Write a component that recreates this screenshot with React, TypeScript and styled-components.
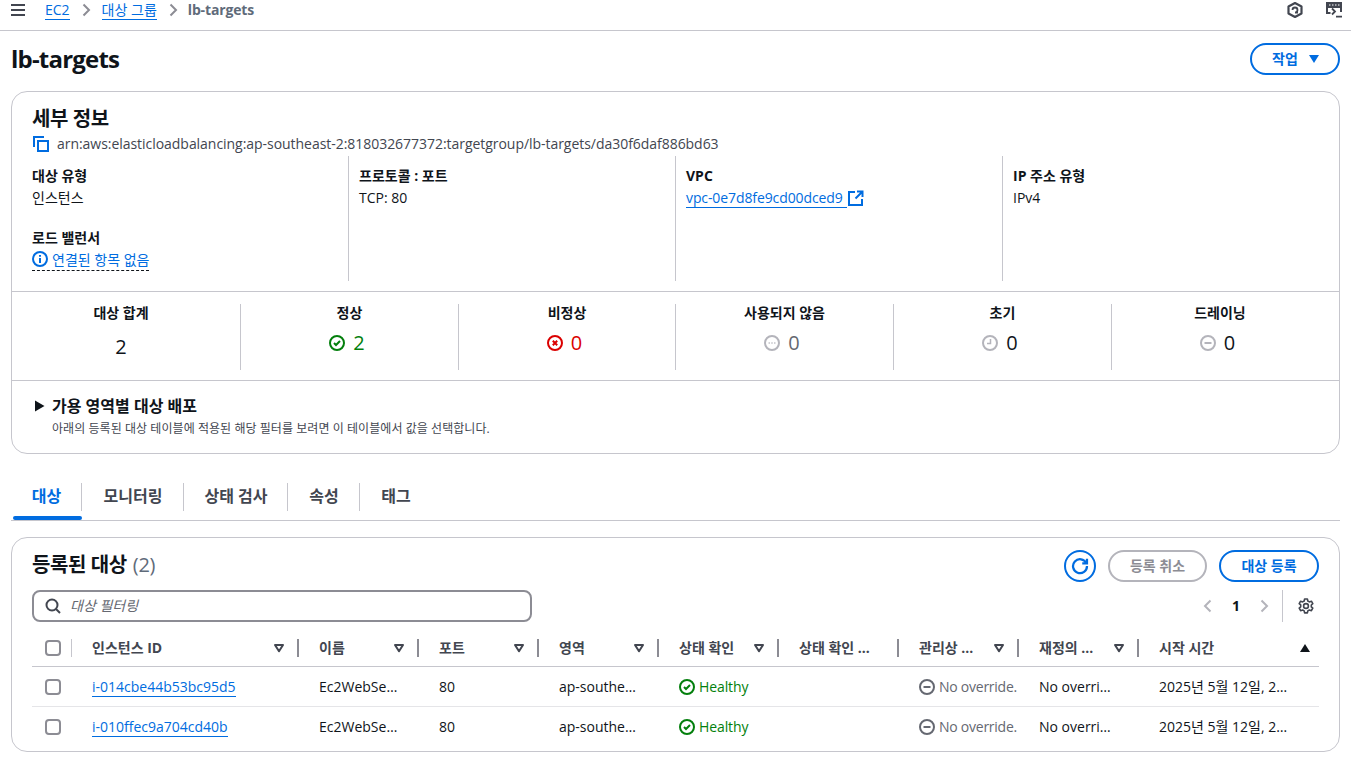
import React from "react";
import styled, { createGlobalStyle } from "styled-components";

const Global = createGlobalStyle`
  html, body { margin: 0; padding: 0; background: #fff; }
  body { font-family: "Open Sans", "Noto Sans CJK KR", sans-serif; font-size: 14px; line-height: 20px; color: #0f141a; overflow: hidden; }
  * { box-sizing: border-box; }
`;

const Page = styled.div`width: 1351px; height: 779px; overflow: hidden;`;
const TopBar = styled.header`
  height: 31px; border-bottom: 1px solid #c6c6cd; display: flex; align-items: flex-start; padding: 0 9px 0 11px;
`;
const Menu = styled.span`display: flex; width: 14px; height: 20px; align-items: center; margin-right: 20px;`;
const Crumbs = styled.nav`display: flex; align-items: center; height: 20px; font-size: 14px; flex: 1;`;
const Crumb = styled.a`color: #006ce0; border-bottom: 1px solid #006ce0; line-height: 19px;`;
const CrumbCurrent = styled.span`color: #5f6b7a; font-weight: 700; letter-spacing: -0.15px; margin-left: -1px;`;
const Sep = styled.span`display: flex; width: 32px; justify-content: center; align-items: center; color: #8c8c94;`;
const TopIcons = styled.div`display: flex; gap: 23px; height: 20px; align-items: center;`;

const TitleRow = styled.div`display: flex; justify-content: space-between; align-items: center; height: 60px; padding: 0 11px 4px 11px;`;
const H1 = styled.h1`margin: 0; font-size: 24px; line-height: 30px; font-weight: 700; letter-spacing: -0.8px;`;
const Pill = styled.button<{ $disabled?: boolean; $w: number }>`
  width: ${p => p.$w}px; height: 32px; border-radius: 16px; background: #fff; font: inherit; font-weight: 700;
  border: 2px solid ${p => (p.$disabled ? "#b4b4bb" : "#006ce0")};
  color: ${p => (p.$disabled ? "#8c8c94" : "#006ce0")};
  display: flex; align-items: center; justify-content: center; gap: 8px; padding: 0;
`;
const MenuPill = styled(Pill)`gap: 10px; padding-left: 2px;`;

const Card = styled.section<{ $h: number }>`
  margin: 0 11px; width: 1329px; height: ${p => p.$h}px; border: 1px solid #c6c6cd; border-radius: 16px; background: #fff;
`;
const DetailHead = styled.div`padding: 15px 20px 0 21px; height: 63px;`;
const H2 = styled.h2`margin: 0 0 0 -1px; font-size: 20px; line-height: 24px; font-weight: 700; letter-spacing: -0.4px;`;
const Arn = styled.div`display: flex; align-items: center; gap: 8px; margin-top: 3px; height: 20px; color: #424650; white-space: nowrap; letter-spacing: -0.04px;`;
const Cols = styled.div`display: grid; grid-template-columns: repeat(4, 327px); height: 125px; margin-top: 1px; padding-left: 10px;`;
const Col = styled.div<{ $line?: boolean }>`
  padding: 10px 0 0 10px; border-right: ${p => (p.$line ? "1px solid #c6c6cd" : "none")};
`;
const Label = styled.div`font-weight: 700; margin-bottom: 2px; line-height: 20px;`;
const Val = styled.div`line-height: 20px; height: 20px; display: flex; align-items: center; gap: 1px;`;
const Block = styled.div`margin-top: 20px;`;
const BlockLabel = styled(Label)`margin-bottom: 0;`;
const Link = styled.a`color: #006ce0; border-bottom: 1px solid #006ce0; line-height: 20px; display: inline-block; height: 20px; letter-spacing: -0.1px; padding-right: 4px;`;
const InfoLink = styled.span`display: inline-flex; align-items: center; gap: 4px; color: #006ce0; border-bottom: 1px dashed #0f141a; height: 23px; line-height: 21px;`;
const Rule = styled.div`height: 1px; background: #c6c6cd;`;
const DetailRule = styled(Rule)`margin-top: 10px;`;
const Stats = styled.div`display: grid; grid-template-columns: 229px 218px 217px 218px 218px 1fr; height: 66px; margin: 12px 11px 10px 0;`;
const Stat = styled.div<{ $last?: boolean; $first?: boolean }>`
  border-right: ${p => (p.$last ? "none" : "1px solid #c6c6cd")}; display: flex; flex-direction: column; align-items: center;
  padding-right: ${p => (p.$first ? "10px" : "0")};
`;
const StatLabel = styled.div`font-weight: 700; height: 20px; margin-top: -1px; margin-bottom: 7px;`;
const StatVal = styled.div<{ $c: string }>`display: flex; align-items: center; gap: 8px; font-size: 20px; line-height: 26px; color: ${p => p.$c}; height: 26px; padding-right: 5px;`;
const Total = styled.div`font-size: 20px; line-height: 26px; margin-top: 4px;`;
const Expand = styled.div`padding: 15px 20px 0 23px;`;
const ExpandHead = styled.div`display: flex; align-items: center; gap: 7px; font-size: 16px; line-height: 20px; font-weight: 700;`;
const ExpandDesc = styled.div`font-size: 12px; line-height: 16px; color: #424650; margin: 5px 0 0 17px; letter-spacing: 0.06px;`;

const Tabs = styled.div`display: flex; align-items: stretch; margin: 29px 11px 16px; height: 38px; width: 1329px; border-bottom: 1px solid #c6c6cd;`;
const Tab = styled.div<{ $w: number; $active?: boolean; $last?: boolean }>`
  position: relative; width: ${p => p.$w}px; font-weight: 700; font-size: 16px; display: flex; justify-content: center; padding-top: 3px;
  color: ${p => (p.$active ? "#006ce0" : "#424650")};
  &::after { content: ""; position: absolute; right: 0; top: 0; height: 28px; width: 1px; background: #c6c6cd; display: ${p => (p.$last ? "none" : "block")}; }
  ${p => p.$active ? `&::before { content: ""; position: absolute; left: 2px; right: 0; bottom: 0; height: 4px; border-radius: 2px; background: #006ce0; }` : ""}
`;

const TableHead = styled.div`display: flex; justify-content: space-between; padding: 12px 20px 0 21px; height: 52px; align-items: flex-start;`;
const H2Row = styled.div`display: flex; gap: 6px; align-items: center; height: 30px;`;
const Count = styled.span`font-size: 20px; line-height: 24px; color: #5f6b7a; letter-spacing: -0.3px;`;
const Actions = styled.div`display: flex; gap: 12px;`;
const FilterRow = styled.div`display: flex; justify-content: space-between; align-items: flex-start; padding: 0 20px; height: 40px;`;
const Filter = styled.div`
  width: 500px; height: 32px; border: 2px solid #8c8c94; border-radius: 8px; display: flex; align-items: center; gap: 9px; padding-left: 11px;
  font-style: italic; color: #656871; font-size: 14px;
`;
const Pager = styled.div`display: flex; align-items: center; height: 32px; color: #0f141a; font-weight: 700;`;
const PagerCell = styled.span<{ $w: number }>`display: flex; justify-content: center; align-items: center; width: ${p => p.$w}px;`;
const PagerLine = styled.span`width: 1px; height: 32px; background: #c6c6cd; margin: -1px 15px 0 0;`;
const Gear = styled.span`display: flex; width: 21px;`;

const Table = styled.div`margin: 0 20px; width: 1287px;`;
const rowCols = "60px 227px 120px 120px 120px 120px 120px 120px 120px 160px";
const HeadRow = styled.div`display: grid; grid-template-columns: ${rowCols}; height: 37px; border-bottom: 1px solid #c6c6cd; align-items: center;`;
const Row = styled.div<{ $last?: boolean }>`display: grid; grid-template-columns: ${rowCols}; height: ${p => (p.$last ? "39px" : "40px")}; align-items: center; border-bottom: ${p => (p.$last ? "none" : "1px solid #e5e5e8")};`;
const Th = styled.div`
  display: flex; align-items: center; justify-content: space-between; font-weight: 700; color: #424650; height: 20px; position: relative; padding-right: 14px; margin-right: 20px; white-space: nowrap;
  &::after { content: ""; position: absolute; right: 0; top: 1px; height: 18px; width: 2px; background: #8c8c94; }
`;
const ThCheck = styled.div`display: flex; align-items: center; height: 20px; position: relative; padding-left: 13px;
  &::after { content: ""; position: absolute; left: 39px; top: 1px; height: 18px; width: 1px; background: #c6c6cd; }
`;
const ThLast = styled.div`display: flex; align-items: center; justify-content: space-between; font-weight: 700; color: #424650; height: 20px; padding-right: 8px;`;
const Box = styled.span`display: block; width: 16px; height: 16px; border: 2px solid #8c8c94; border-radius: 4px; margin-left: 13px;`;
const ThBox = styled(Box)`margin-left: 0;`;
const Td = styled.div`white-space: nowrap; overflow: hidden;`;
const RowLink = styled.a`color: #006ce0; border-bottom: 1px solid #006ce0;`;
const Status = styled.div<{ $c: string; $tight?: boolean }>`display: flex; align-items: center; gap: 4px; color: ${p => p.$c}; white-space: nowrap; letter-spacing: ${p => (p.$tight ? "-0.25px" : "-0.1px")};`;

const Chevron = ({ left, c = "#8c8c94" }: { left?: boolean; c?: string }) => (
  <svg width="16" height="16" viewBox="0 0 16 16" fill="none" stroke={c} strokeWidth="2">
    <path d={left ? "M10.5 2.5 5 8l5.5 5.5" : "M5.5 2.5 11 8l-5.5 5.5"} />
  </svg>
);
const Filt = () => (
  <svg width="12" height="10" viewBox="0 0 12 10" fill="none" stroke="#424650" strokeWidth="2" strokeLinejoin="round"><path d="M2 2h8L6 8.2z" /></svg>
);
const CircleIcon = ({ c, kind, size = 16 }: { c: string; kind: string; size?: number }) => (
  <svg width={size} height={size} viewBox="0 0 16 16" fill="none" stroke={c} strokeWidth="2">
    <circle cx="8" cy="8" r="7" />
    {kind === "check" && <path d="m5 8 2 2 4-4" />}
    {kind === "x" && <path d="m5.8 5.8 4.4 4.4m0-4.4-4.4 4.4" />}
    {kind === "minus" && <path d="M4.5 8h7" />}
    {kind === "clock" && <path d="M8.5 4v4.500H5" strokeWidth="1.5" />}
    {kind === "dots" && <path d="M4.6 8h1.200m1.600 0h1.200m1.600 0h1.200" strokeWidth="1.6" />}
    {kind === "info" && <path d="M8 7v5M8 4v1.800" />}
  </svg>
);

const healthy = (
  <Status $c="#037f0c"><CircleIcon c="#037f0c" kind="check" /><span>Healthy</span></Status>
);
const noOverride = (
  <Status $c="#656871" $tight><CircleIcon c="#656871" kind="minus" /><span>No override.</span></Status>
);

const rows = ["i-014cbe44b53bc95d5", "i-010ffec9a704cd40b"];

export default function App() {
  return (
    <Page>
      <Global />
      <TopBar>
        <Menu>
          <svg width="14" height="12" viewBox="0 0 14 12" stroke="#424650" strokeWidth="2"><path d="M0 1h14M0 6h14M0 11h14" /></svg>
        </Menu>
        <Crumbs>
          <Crumb>EC2</Crumb>
          <Sep><Chevron /></Sep>
          <Crumb>대상 그룹</Crumb>
          <Sep><Chevron /></Sep>
          <CrumbCurrent>lb-targets</CrumbCurrent>
        </Crumbs>
        <TopIcons>
          <svg width="16" height="16" viewBox="0 0 16 16" fill="none" stroke="#424650" strokeWidth="2.2"><path d="M8 1 14.500 4.500v7L8 15 1.500 11.500v-7z" strokeLinejoin="round" /><path d="M5.500 8a2.500 2.500 0 1 1 2.500 2.500h3" strokeWidth="1.8" /></svg>
          <svg width="16" height="16" viewBox="0 0 16 16" fill="none" stroke="#424650"><path d="M1 1h14v4H1z" fill="#424650" strokeWidth="2" /><path d="M1 5v6h3.500M15 5v5" strokeWidth="2" /><path d="m6 6.500 3 3-3 3M10 14.700h6" strokeWidth="1.8" /><path d="M3 3h1.500M6 3h1.500M9 3h1.500M12 3h1.500" stroke="#fff" strokeWidth="1.2" /></svg>
        </TopIcons>
      </TopBar>
      <TitleRow>
        <H1>lb-targets</H1>
        <MenuPill $w={90}>
          작업
          <svg width="12" height="10" viewBox="0 0 12 10"><path d="M1 1h10L6 9z" fill="#006ce0" /></svg>
        </MenuPill>
      </TitleRow>
      <Card $h={363}>
        <DetailHead>
          <H2>세부 정보</H2>
          <Arn>
            <svg width="16" height="16" viewBox="0 0 16 16" fill="none" stroke="#006ce0" strokeWidth="2"><path d="M1 11V1h10" /><path d="M5 5h10v10H5z" /></svg>
            arn:aws:elasticloadbalancing:ap-southeast-2:818032677372:targetgroup/lb-targets/da30f6daf886bd63
          </Arn>
        </DetailHead>
        <Cols>
          <Col $line>
            <Label>대상 유형</Label>
            <Val>인스턴스</Val>
            <Block>
              <BlockLabel>로드 밸런서</BlockLabel>
              <InfoLink><CircleIcon c="#006ce0" kind="info" />연결된 항목 없음</InfoLink>
            </Block>
          </Col>
          <Col $line>
            <Label>프로토콜 : 포트</Label>
            <Val>TCP: 80</Val>
          </Col>
          <Col $line>
            <Label>VPC</Label>
            <Val>
              <Link>vpc-0e7d8fe9cd00dced9</Link>
              <svg width="16" height="16" viewBox="0 0 16 16" fill="none" stroke="#006ce0" strokeWidth="2"><path d="M7 2H1v13h13V9" /><path d="M9 1.500h5.500V7M14 2 7.500 8.500" /></svg>
            </Val>
          </Col>
          <Col>
            <Label>IP 주소 유형</Label>
            <Val>IPv4</Val>
          </Col>
        </Cols>
        <DetailRule />
        <Stats>
          <Stat $first>
            <StatLabel>대상 합계</StatLabel>
            <Total>2</Total>
          </Stat>
          <Stat>
            <StatLabel>정상</StatLabel>
            <StatVal $c="#037f0c"><CircleIcon c="#037f0c" kind="check" />2</StatVal>
          </Stat>
          <Stat>
            <StatLabel>비정상</StatLabel>
            <StatVal $c="#db0000"><CircleIcon c="#db0000" kind="x" />0</StatVal>
          </Stat>
          <Stat>
            <StatLabel>사용되지 않음</StatLabel>
            <StatVal $c="#656871"><CircleIcon c="#b4b4bb" kind="dots" />0</StatVal>
          </Stat>
          <Stat>
            <StatLabel>초기</StatLabel>
            <StatVal $c="#0f141a"><CircleIcon c="#b4b4bb" kind="clock" />0</StatVal>
          </Stat>
          <Stat $last>
            <StatLabel>드레이닝</StatLabel>
            <StatVal $c="#0f141a"><CircleIcon c="#b4b4bb" kind="minus" />0</StatVal>
          </Stat>
        </Stats>
        <Rule />
        <Expand>
          <ExpandHead>
            <svg width="10" height="12" viewBox="0 0 10 12"><path d="M0 0.500v11l9.500-5.500z" fill="#0f141a" /></svg>
            가용 영역별 대상 배포
          </ExpandHead>
          <ExpandDesc>아래의 등록된 대상 테이블에 적용된 해당 필터를 보려면 이 테이블에서 값을 선택합니다.</ExpandDesc>
        </Expand>
      </Card>
      <Tabs>
        <Tab $w={71} $active>대상</Tab>
        <Tab $w={102}>모니터링</Tab>
        <Tab $w={104}>상태 검사</Tab>
        <Tab $w={72}>속성</Tab>
        <Tab $w={72} $last>태그</Tab>
      </Tabs>
      <Card $h={215}>
        <TableHead>
          <H2Row>
            <H2>등록된 대상</H2>
            <Count>(2)</Count>
          </H2Row>
          <Actions>
            <Pill $w={32}>
              <svg width="18" height="18" viewBox="0 0 16 16" fill="none" stroke="#006ce0" strokeWidth="2"><path d="M13.600 5.500A6.200 6.200 0 1 0 14.200 8" /><path d="M14.200 1.500v4.200H10" /></svg>
            </Pill>
            <Pill $w={99} $disabled>등록 취소</Pill>
            <Pill $w={100}>대상 등록</Pill>
          </Actions>
        </TableHead>
        <FilterRow>
          <Filter>
            <svg width="16" height="16" viewBox="0 0 16 16" fill="none" stroke="#424650" strokeWidth="2"><circle cx="7" cy="7" r="5.500" /><path d="m11 11 4 4" /></svg>
            대상 필터링
          </Filter>
          <Pager>
            <PagerCell $w={28}><Chevron left c="#b4b4bb" /></PagerCell>
            <PagerCell $w={28}>1</PagerCell>
            <PagerCell $w={28}><Chevron c="#b4b4bb" /></PagerCell>
            <PagerCell $w={4} />
            <PagerLine />
            <Gear>
              <svg width="16" height="16" viewBox="0 0 16 16" fill="none" stroke="#424650" strokeWidth="1.6" strokeLinejoin="round"><circle cx="8" cy="8" r="2.400" /><path d="M6.600 1h2.800l.4 2 1.600.9 2-.7 1.400 2.400-1.500 1.400v1.900l1.500 1.300-1.400 2.500-2-.7-1.600.9-.4 2H6.600l-.4-2-1.600-.9-2 .7L1.200 10.100l1.500-1.300V6.900L1.200 5.600l1.400-2.400 2 .7 1.600-.9z" /></svg>
            </Gear>
          </Pager>
        </FilterRow>
        <Table>
          <HeadRow>
            <ThCheck><ThBox /></ThCheck>
            <Th>인스턴스 ID<Filt /></Th>
            <Th>이름<Filt /></Th>
            <Th>포트<Filt /></Th>
            <Th>영역<Filt /></Th>
            <Th>상태 확인<Filt /></Th>
            <Th>상태 확인 ...</Th>
            <Th>관리상 ...<Filt /></Th>
            <Th>재정의 ...<Filt /></Th>
            <ThLast>시작 시간
              <svg width="12" height="10" viewBox="0 0 12 10"><path d="M6 1l5 8H1z" fill="#0f141a" /></svg>
            </ThLast>
          </HeadRow>
          {rows.map((id, i) => (
            <Row key={id} $last={i === 1}>
              <Box />
              <Td><RowLink>{id}</RowLink></Td>
              <Td>Ec2WebSe…</Td>
              <Td>80</Td>
              <Td>ap-southe…</Td>
              {healthy}
              <Td />
              {noOverride}
              <Td>No overri…</Td>
              <Td>2025년 5월 12일, 2…</Td>
            </Row>
          ))}
        </Table>
      </Card>
    </Page>
  );
}
